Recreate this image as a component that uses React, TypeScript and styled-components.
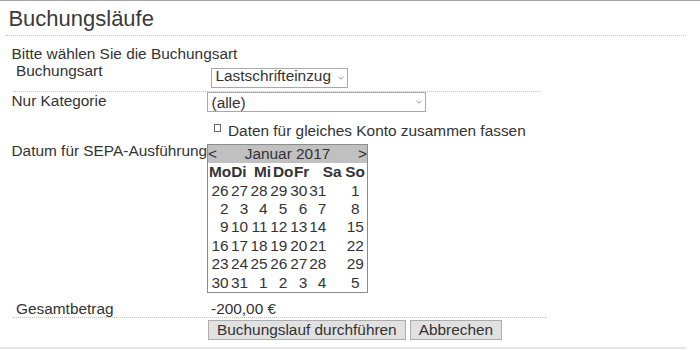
import styled, { createGlobalStyle } from 'styled-components';

const GlobalStyle = createGlobalStyle`
    body {
        margin: 0;
        font-family: "Liberation Sans", Arial, sans-serif;
        font-size: 15.4px;
        color: #333;
        background: #fff;
    }
`

const Page = styled.div`
    width: 700px;
    border-top: 1px solid #a3a3a3;
`

const Panel = styled.div`
    width: 686px;
    padding-bottom: 6.8px;
    border-bottom: 2px solid #e6e6e6;
`

const Title = styled.h1`
    margin: 0 0 0 6px;
    padding: 4.5px 0 4.5px 2.4px;
    font-size: 22px;
    font-weight: normal;
    line-height: 25px;
    color: #3a3a3a;
    border-bottom: 1px dotted #c4c4c4;
`

const Form = styled.div`
    padding-left: 11.5px;
`

const Intro = styled.div`
    margin-top: 8.9px;
    line-height: 17px;
`

interface RowProps {
    $top?: number
    $bottom?: number
    $rule?: number
}

const Row = styled.div<RowProps>`
    display: flex;
    align-items: flex-start;
    padding-top: ${p => p.$top ?? 0}px;
    padding-bottom: ${p => p.$bottom ?? 0}px;
    ${p => p.$rule ? `
        width: ${p.$rule}px;
        margin-left: 1.5px;
        border-bottom: 1px dotted #c4c4c4;
    ` : ''}
`

interface CellProps {
    $inset?: number
    $width?: number
}

const Label = styled.div<CellProps>`
    flex-shrink: 0;
    box-sizing: border-box;
    width: ${p => p.$width ?? 195.5}px;
    padding-left: ${p => p.$inset ?? 0}px;
    line-height: 17px;
    white-space: nowrap;
`

const Value = styled.div<CellProps>`
    display: flex;
    align-items: flex-start;
    gap: 4px;
    padding-left: ${p => p.$inset ?? 0}px;
    line-height: 17px;
    white-space: nowrap;
`

interface SelectProps {
    $width: number
    $shift?: number
    $textTop?: number
}

const SelectBox = styled.div<SelectProps>`
    display: flex;
    align-items: flex-start;
    justify-content: space-between;
    box-sizing: border-box;
    width: ${p => p.$width}px;
    height: 20px;
    margin-top: ${p => p.$shift ?? 0}px;
    padding: ${p => p.$textTop ?? 0}px 3px 0 3.5px;
    border: 1px solid #a9a9a9;
    background: #fff;
    line-height: 14px;
    svg {
        margin-top: ${p => 7 - (p.$textTop ?? 0)}px;
    }
`

const CheckMark = styled.span`
    display: inline-block;
    box-sizing: border-box;
    width: 7px;
    height: 8px;
    margin: 2px 7px 0 0;
    border: 1px solid #6a6a6a;
    vertical-align: top;
`

const Calendar = styled.div`
    box-sizing: border-box;
    width: 161px;
    margin-top: 2px;
    border: 1px solid #8c8c8c;
`

const CalendarHead = styled.div`
    display: flex;
    justify-content: space-between;
    height: 18px;
    line-height: 18px;
    background: #c0c0c0;
`

const WeekdayGrid = styled.div`
    display: grid;
    grid-template-columns: 22.3px 22.7px 19px 21px 28.8px 22.5px 1fr;
    padding-left: 0.9px;
    height: 18.4px;
    line-height: 18.4px;
    font-weight: bold;
`

const DayGrid = styled.div`
    display: grid;
    grid-template-columns: 20.6px 19.6px 19.4px 19.8px 20px 19px 1fr;
    grid-auto-rows: 18.4px;
    line-height: 18.4px;
`

const Day = styled.div`
    text-align: right;
    &:nth-child(7n) {
        text-align: center;
        padding-left: 17.2px;
    }
`

const Button = styled.button`
    box-sizing: border-box;
    height: 20px;
    margin: 2px 0 0;
    padding: 0 8px;
    border: 1px solid #adadad;
    background: #e1e1e1;
    color: #333;
    font-family: inherit;
    font-size: 15.4px;
    line-height: 18px;
`

const weekdays = ['Mo', 'Di', 'Mi', 'Do', 'Fr', 'Sa', 'So'];

const weeks = [
    [26, 27, 28, 29, 30, 31, 1],
    [2, 3, 4, 5, 6, 7, 8],
    [9, 10, 11, 12, 13, 14, 15],
    [16, 17, 18, 19, 20, 21, 22],
    [23, 24, 25, 26, 27, 28, 29],
    [30, 31, 1, 2, 3, 4, 5],
];

const Chevron = () => (
    <svg width="6" height="4" viewBox="0 0 6 4">
        <polyline points="0.5,0.8 3,3.2 5.5,0.8" fill="none" stroke="#9a9a9a" strokeWidth="1" />
    </svg>
)

interface SelectFieldProps {
    value: string
    width: number
    shift?: number
    textTop?: number
}

const SelectField = ({ value, width, shift, textTop }: SelectFieldProps) => (
    <SelectBox $width={width} $shift={shift} $textTop={textTop}>
        <span>{value}</span>
        <Chevron />
    </SelectBox>
)

const App = () => {
    return (
        <Page>
            <GlobalStyle />
            <Panel>
                <Title>Buchungsläufe</Title>
                <Form>
                    <Intro>Bitte wählen Sie die Buchungsart</Intro>

                    <Row $rule={527} $bottom={3}>
                        <Label $width={194} $inset={3}>Buchungsart</Label>
                        <Value $inset={4}>
                            <SelectField value="Lastschrifteinzug" width={137} shift={6} />
                        </Value>
                    </Row>

                    <Row>
                        <Label>Nur Kategorie</Label>
                        <Value>
                            <SelectField value="(alle)" width={219} textTop={2.7} />
                        </Value>
                    </Row>

                    <Row $top={10.3}>
                        <Label />
                        <Value $inset={7}>
                            <span><CheckMark />Daten für gleiches Konto zusammen fassen</span>
                        </Value>
                    </Row>

                    <Row $top={3}>
                        <Label>Datum für SEPA-Ausführung</Label>
                        <Value>
                            <Calendar>
                                <CalendarHead>
                                    <span>&lt;</span>
                                    <span>Januar 2017</span>
                                    <span>&gt;</span>
                                </CalendarHead>
                                <WeekdayGrid>
                                    {weekdays.map(day => <span key={day}>{day}</span>)}
                                </WeekdayGrid>
                                <DayGrid>
                                    {weeks.flat().map((day, index) => <Day key={index}>{day}</Day>)}
                                </DayGrid>
                            </Calendar>
                        </Value>
                    </Row>

                    <Row $rule={534} $top={7.2}>
                        <Label $width={194} $inset={3}>Gesamtbetrag</Label>
                        <Value $inset={4}>-200,00 €</Value>
                    </Row>

                    <Row>
                        <Label />
                        <Value $inset={1}>
                            <Button>Buchungslauf durchführen</Button>
                            <Button>Abbrechen</Button>
                        </Value>
                    </Row>
                </Form>
            </Panel>
        </Page>
    )
}

export default App;
